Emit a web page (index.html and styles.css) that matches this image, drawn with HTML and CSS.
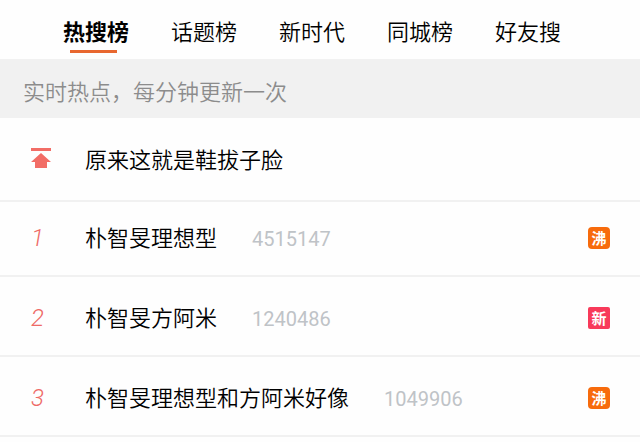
FILE: index.html
```html
<!DOCTYPE html>
<html lang="zh-CN">
<head>
  <meta charset="UTF-8">
  <meta name="viewport" content="width=device-width, initial-scale=1">
  <title>热搜榜</title>
  <link rel="stylesheet" href="styles.css">
</head>
<body>

  <nav class="tabs">
    <button class="tab active" type="button">热搜榜</button>
    <button class="tab" type="button">话题榜</button>
    <button class="tab" type="button">新时代</button>
    <button class="tab" type="button">同城榜</button>
    <button class="tab" type="button">好友搜</button>
  </nav>

  <p class="notice">实时热点，每分钟更新一次</p>

  <ul class="hot-list">
    <li class="row pinned">
      <span class="rank">
        <svg class="top-icon" viewBox="0 0 20 20" aria-hidden="true">
          <rect x="0" y="0" width="20" height="3"/>
          <path d="M10 5 L20 14 H16 V20 H4 V14 H0 Z"/>
        </svg>
      </span>
      <a class="title" href="#">原来这就是鞋拔子脸</a>
    </li>
    <li class="row first">
      <span class="rank">1</span>
      <a class="title" href="#">朴智旻理想型</a>
      <span class="count">4515147</span>
      <span class="tag boil">沸</span>
    </li>
    <li class="row">
      <span class="rank">2</span>
      <a class="title" href="#">朴智旻方阿米</a>
      <span class="count">1240486</span>
      <span class="tag new">新</span>
    </li>
    <li class="row">
      <span class="rank">3</span>
      <a class="title" href="#">朴智旻理想型和方阿米好像</a>
      <span class="count">1049906</span>
      <span class="tag boil">沸</span>
    </li>
  </ul>

</body>
</html>
```
FILE: styles.css
```css
* {
  box-sizing: border-box;
}

body {
  margin: 0;
  font-family: "Noto Sans CJK SC", sans-serif;
  font-size: 22px;
  font-weight: 350;
  line-height: 32px;
  color: #000;
  background-color: #fefefe;
}

.tabs {
  display: flex;
  gap: 42px;
  padding: 14px 63px 6px;
}

.tab {
  display: flex;
  flex-direction: column;
  align-items: flex-start;
  height: 39px;
  padding: 0;
  border: none;
  background: none;
  font: inherit;
  color: inherit;
  white-space: nowrap;
  cursor: pointer;
}

.tab.active {
  font-weight: bold;
}

.tab.active::after {
  content: "";
  width: 47px;
  height: 3px;
  margin: 4px 0 0 7px;
  background-color: #e8672f;
}

.notice {
  margin: 0;
  padding: 15px 23px 12px;
  color: #8c8c8c;
  background-color: #f1f1f1;
}

.hot-list {
  margin: 0;
  padding: 0;
  list-style: none;
}

.row {
  display: flex;
  align-items: center;
  min-height: 80px;
  padding: 3px 30px 0 31px;
  border-bottom: 2px solid #f1f1f1;
}

.row.pinned {
  min-height: 84px;
  padding-top: 0;
}

.row.first {
  min-height: 75px;
  padding-top: 0;
  padding-bottom: 2px;
}

.rank {
  flex: none;
  width: 54px;
  font-family: Roboto, sans-serif;
  font-size: 24px;
  font-style: italic;
  font-weight: 350;
  color: #ee6a66;
}

.top-icon {
  display: block;
  width: 20px;
  height: 20px;
  margin-bottom: 3px;
  fill: #f26d66;
}

.title {
  padding-bottom: 3px;
  color: inherit;
  text-decoration: none;
}

.count {
  margin-left: 35px;
  padding-top: 2px;
  font-family: Roboto, sans-serif;
  font-size: 20px;
  font-weight: 400;
  color: #bfc3c7;
}

.tag {
  flex: none;
  width: 22px;
  height: 22px;
  margin-left: auto;
  border-radius: 4px;
  font-size: 15px;
  font-weight: bold;
  line-height: 21px;
  text-align: center;
  color: #fff;
}

.tag.boil {
  background-color: #f76b0c;
}

.tag.new {
  border-radius: 2px;
  background-color: #f83a5a;
}
```
